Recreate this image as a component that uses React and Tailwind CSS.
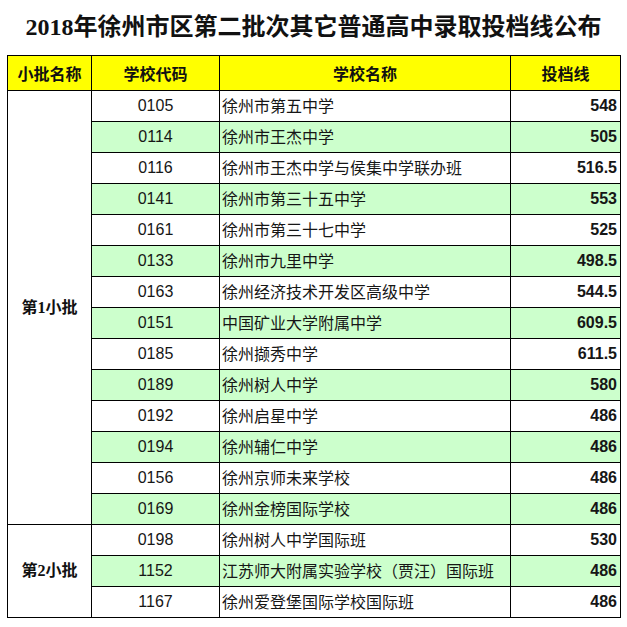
import React from "react";

const rows = [
  ["0105", "徐州市第五中学", "548"],
  ["0114", "徐州市王杰中学", "505"],
  ["0116", "徐州市王杰中学与侯集中学联办班", "516.5"],
  ["0141", "徐州市第三十五中学", "553"],
  ["0161", "徐州市第三十七中学", "525"],
  ["0133", "徐州市九里中学", "498.5"],
  ["0163", "徐州经济技术开发区高级中学", "544.5"],
  ["0151", "中国矿业大学附属中学", "609.5"],
  ["0185", "徐州撷秀中学", "611.5"],
  ["0189", "徐州树人中学", "580"],
  ["0192", "徐州启星中学", "486"],
  ["0194", "徐州辅仁中学", "486"],
  ["0156", "徐州京师未来学校", "486"],
  ["0169", "徐州金榜国际学校", "486"],
  ["0198", "徐州树人中学国际班", "530"],
  ["1152", "江苏师大附属实验学校（贾汪）国际班", "486"],
  ["1167", "徐州爱登堡国际学校国际班", "486"],
];

const cjk = { fontFamily: '"Noto Sans CJK SC", sans-serif' };
const arial = { fontFamily: '"Liberation Sans", Arial, sans-serif' };
const serifCjk = { fontFamily: '"Liberation Serif", "Noto Sans CJK SC", serif' };

export default function App() {
  return (
    <div className="w-[627px] h-[627px] bg-white overflow-hidden">
      <div
        className="h-[55px] flex items-center justify-center pb-[2px] text-[24px] font-bold text-[#111] leading-none"
        style={serifCjk}
      >
        2018年徐州市区第二批次其它普通高中录取投档线公布
      </div>
      <table className="ml-[7px] w-[613px] table-fixed border-collapse border border-black text-[#161616]">
        <colgroup>
          <col className="w-[84px]" />
          <col className="w-[128px]" />
          <col className="w-[291px]" />
          <col className="w-[110px]" />
        </colgroup>
        <thead>
          <tr className="h-[35px] bg-[#ffff00]">
            {["小批名称", "学校代码", "学校名称", "投档线"].map((h) => (
              <th
                key={h}
                className="border border-black text-[16px] font-bold text-center p-0 leading-none text-[#111]"
                style={cjk}
              >
                {h}
              </th>
            ))}
          </tr>
        </thead>
        <tbody>
          {rows.map(([code, name, score], i) => {
            const green = i % 2 === 1;
            const bg = green ? "bg-[#ccffcc]" : "bg-white";
            return (
              <tr key={code} className="h-[31px]">
                {i === 0 && (
                  <td
                    rowSpan={14}
                    className="border border-black bg-white text-center text-[16px] font-bold p-0 leading-none text-[#111]"
                    style={serifCjk}
                  >
                    第1小批
                  </td>
                )}
                {i === 14 && (
                  <td
                    rowSpan={3}
                    className="border border-black bg-white text-center text-[16px] font-bold p-0 leading-none text-[#111]"
                    style={serifCjk}
                  >
                    第2小批
                  </td>
                )}
                <td className={`border border-black ${bg} text-center text-[16px] p-0`} style={arial}>
                  {code}
                </td>
                <td
                  className={`border border-black ${bg} text-left text-[16px] pl-[2px] pt-0 pb-[3px] leading-none whitespace-nowrap`}
                  style={cjk}
                >
                  {name}
                </td>
                <td className={`border border-black ${bg} text-right text-[16px] font-bold pr-[3px] py-0`} style={arial}>
                  {score}
                </td>
              </tr>
            );
          })}
        </tbody>
      </table>
    </div>
  );
}
